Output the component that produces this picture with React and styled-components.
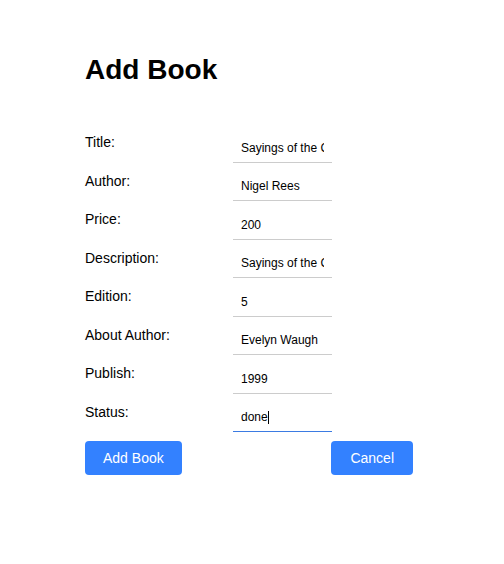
import React from "react";
import styled, { createGlobalStyle } from "styled-components";

const GlobalStyle = createGlobalStyle`
    html, body {
        margin: 0;
        padding: 0;
        background: #ffffff;
        font-family: "Liberation Sans", Arial, sans-serif;
        color: #000000;
    }
`;

const Page = styled.div`
    padding: 54px 0 0 85px;
`;

const Heading = styled.h1`
    margin: 0 0 38px 0;
    font-size: 28px;
    font-weight: bold;
    line-height: 32px;
`;

const Form = styled.form`
    width: 328px;
`;

const Fields = styled.div`
    display: grid;
    grid-template-columns: 148px 99px;
    grid-auto-rows: 38.5px;
`;

const Label = styled.label`
    font-size: 14px;
    line-height: 16px;
    padding-top: 10px;
`;

const InputWrap = styled.div`
    position: relative;
    width: 99px;
    height: 31px;
    margin-top: 7.5px;
    box-sizing: border-box;
    border-bottom: 1px solid ${props => (props.$active ? "#3b7be2" : "#cccccc")};
`;

const Input = styled.input`
    box-sizing: border-box;
    width: 100%;
    height: 30px;
    padding: 2px 8px 0 8px;
    border: none;
    border-radius: 0;
    outline: none;
    font-family: "Liberation Sans", Arial, sans-serif;
    font-size: 12px;
    color: #000000;
    background: transparent;
`;

/* text caret of the focused field */
const Caret = styled.span`
    position: absolute;
    left: 35px;
    top: 10px;
    width: 1px;
    height: 13px;
    background: #000000;
`;

const Actions = styled.div`
    display: flex;
    justify-content: space-between;
    margin-top: 9px;
`;

const Button = styled.button`
    height: 34px;
    padding: 0 ${props => props.$pad}px;
    border: none;
    border-radius: 4px;
    background: #3381ff;
    color: #ffffff;
    font-family: "Liberation Sans", Arial, sans-serif;
    font-size: 14px;
    cursor: pointer;
`;

const fields = [
    { label: "Title:", value: "Sayings of the Century" },
    { label: "Author:", value: "Nigel Rees" },
    { label: "Price:", value: "200" },
    { label: "Description:", value: "Sayings of the Century" },
    { label: "Edition:", value: "5" },
    { label: "About Author:", value: "Evelyn Waugh" },
    { label: "Publish:", value: "1999" },
    { label: "Status:", value: "done" },
];

const App = () => {
    return (
        <Page>
            <GlobalStyle />
            <Heading>Add Book</Heading>
            <Form onSubmit={e => e.preventDefault()}>
                <Fields>
                    {fields.map((f, i) => {
                        const last = i === fields.length - 1;
                        return (
                            <React.Fragment key={f.label}>
                                <Label>{f.label}</Label>
                                <InputWrap $active={last}>
                                    <Input defaultValue={f.value} />
                                    {last && <Caret />}
                                </InputWrap>
                            </React.Fragment>
                        );
                    })}
                </Fields>
                <Actions>
                    <Button type="submit" $pad={18}>Add Book</Button>
                    <Button type="button" $pad={19}>Cancel</Button>
                </Actions>
            </Form>
        </Page>
    );
};

export default App;
